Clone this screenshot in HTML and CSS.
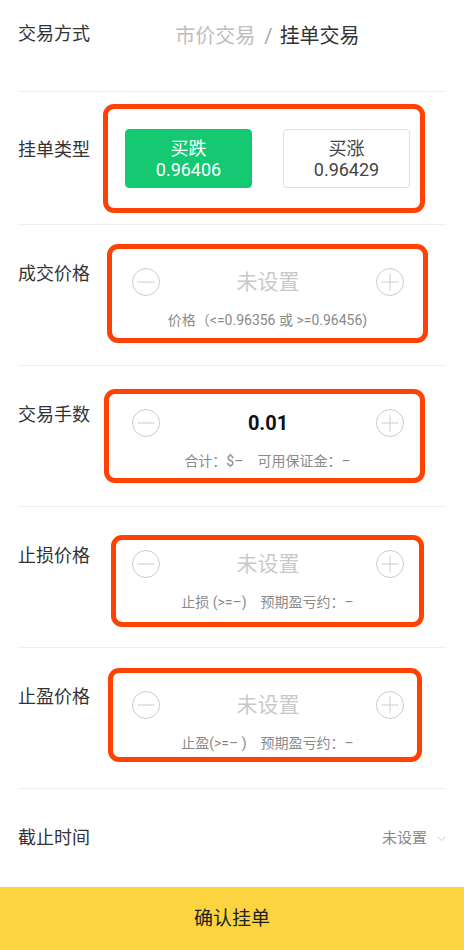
FILE: index.html
```html
<!DOCTYPE html>
<html lang="zh-CN">
<head>
<meta charset="utf-8">
<title>挂单交易</title>
<link rel="stylesheet" href="styles.css">
</head>
<body>
<div class="page">
  <div class="row row--mode">
    <div class="label">交易方式</div>
    <div class="field">
      <div class="mode"><span class="mode-off">市价交易</span><span class="slash">/</span><span class="mode-on">挂单交易</span></div>
    </div>
  </div>

  <div class="row row--type">
    <div class="label label--type">挂单类型</div>
    <div class="field">
      <div class="sides">
        <button class="side side--on"><span>买跌</span><span>0.96406</span></button>
        <button class="side"><span>买涨</span><span>0.96429</span></button>
      </div>
      <span class="mark mark--type"></span>
    </div>
  </div>

  <div class="row">
    <div class="label">成交价格</div>
    <div class="field">
      <div class="stepper">
        <div class="stepper-top">
          <svg class="ctl" viewBox="0 0 28 28" width="28" height="28"><circle cx="14" cy="14" r="13.5"/><line x1="5.5" y1="14" x2="22.5" y2="14"/></svg>
          <span class="value">未设置</span>
          <svg class="ctl" viewBox="0 0 28 28" width="28" height="28"><circle cx="14" cy="14" r="13.5"/><line x1="5.5" y1="14" x2="22.5" y2="14"/><line x1="14" y1="5.5" x2="14" y2="22.5"/></svg>
        </div>
        <div class="sub">价格（&lt;=0.96356 或 &gt;=0.96456)</div>
      </div>
      <span class="mark mark--price"></span>
    </div>
  </div>

  <div class="row">
    <div class="label">交易手数</div>
    <div class="field">
      <div class="stepper">
        <div class="stepper-top">
          <svg class="ctl" viewBox="0 0 28 28" width="28" height="28"><circle cx="14" cy="14" r="13.5"/><line x1="5.5" y1="14" x2="22.5" y2="14"/></svg>
          <span class="value value--set">0.01</span>
          <svg class="ctl" viewBox="0 0 28 28" width="28" height="28"><circle cx="14" cy="14" r="13.5"/><line x1="5.5" y1="14" x2="22.5" y2="14"/><line x1="14" y1="5.5" x2="14" y2="22.5"/></svg>
        </div>
        <div class="sub"><span>合计：$–</span><span class="sub-gap">可用保证金：–</span></div>
      </div>
      <span class="mark mark--lots"></span>
    </div>
  </div>

  <div class="row">
    <div class="label">止损价格</div>
    <div class="field">
      <div class="stepper">
        <div class="stepper-top">
          <svg class="ctl" viewBox="0 0 28 28" width="28" height="28"><circle cx="14" cy="14" r="13.5"/><line x1="5.5" y1="14" x2="22.5" y2="14"/></svg>
          <span class="value">未设置</span>
          <svg class="ctl" viewBox="0 0 28 28" width="28" height="28"><circle cx="14" cy="14" r="13.5"/><line x1="5.5" y1="14" x2="22.5" y2="14"/><line x1="14" y1="5.5" x2="14" y2="22.5"/></svg>
        </div>
        <div class="sub"><span>止损 (&gt;=–)</span><span class="sub-gap">预期盈亏约：–</span></div>
      </div>
      <span class="mark mark--loss"></span>
    </div>
  </div>

  <div class="row">
    <div class="label">止盈价格</div>
    <div class="field">
      <div class="stepper">
        <div class="stepper-top">
          <svg class="ctl" viewBox="0 0 28 28" width="28" height="28"><circle cx="14" cy="14" r="13.5"/><line x1="5.5" y1="14" x2="22.5" y2="14"/></svg>
          <span class="value">未设置</span>
          <svg class="ctl" viewBox="0 0 28 28" width="28" height="28"><circle cx="14" cy="14" r="13.5"/><line x1="5.5" y1="14" x2="22.5" y2="14"/><line x1="14" y1="5.5" x2="14" y2="22.5"/></svg>
        </div>
        <div class="sub"><span>止盈(&gt;=– )</span><span class="sub-gap">预期盈亏约：–</span></div>
      </div>
      <span class="mark mark--profit"></span>
    </div>
  </div>

  <div class="row row--expire">
    <div class="label label--plain">截止时间</div>
    <div class="expire">
      <span>未设置</span>
      <svg class="chev" viewBox="0 0 9 5" width="9" height="5"><polyline points="0.5,0.5 4.5,4.5 8.5,0.5"/></svg>
    </div>
  </div>

  <button class="confirm">确认挂单</button>
</div>
</body>
</html>
```

FILE: styles.css
```css
* { box-sizing: border-box; }

html, body {
  margin: 0;
  padding: 0;
  background: #fff;
}

body {
  font-family: Roboto, "Noto Sans CJK SC", sans-serif;
  color: #333;
  width: 464px;
  height: 950px;
  overflow: hidden;
}

.page {
  display: flex;
  flex-direction: column;
}

.row {
  display: flex;
  align-items: flex-start;
  margin: 0 18px;
  border-bottom: 1px solid #efefef;
  padding-bottom: 35px;
}

.label {
  flex: 0 0 86px;
  font-size: 18px;
  line-height: 24px;
  margin-top: 37px;
  color: #333;
}

.field {
  position: relative;
  flex: 0 0 327px;
}

/* row 1 */
.row--mode {
  height: 92px;
  padding-bottom: 0;
}
.row--mode .label { margin-top: 22px; }

.mode {
  margin-top: 23px;
  display: flex;
  justify-content: center;
  font-size: 20px;
  line-height: 26px;
}
.mode-off { color: #bdbdbd; }
.slash { color: #a8a8a8; margin: 0 7px 0 9px; }
.mode-on { color: #333; }

/* row 2 */
.row--type { padding-bottom: 0; height: 133px; }
.label--type { margin-top: 46px; }

.sides {
  display: flex;
  justify-content: center;
  gap: 31px;
  padding-top: 37px;
}

.side {
  width: 127px;
  height: 59px;
  border: 1px solid #dedede;
  border-radius: 4px;
  background: #fff;
  color: #444;
  display: flex;
  flex-direction: column;
  align-items: center;
  justify-content: center;
  font-family: inherit;
  font-size: 18px;
  line-height: 21px;
  padding: 1px 0 0;
}
.side--on {
  background: #15c872;
  border-color: #15c872;
  color: #fff;
}

/* stepper */
.stepper { padding-top: 43px; }

.stepper-top {
  display: flex;
  align-items: center;
  justify-content: space-between;
  height: 28px;
  padding: 0 27px 0 28px;
}

.ctl {
  fill: none;
  stroke: #cccccc;
  stroke-width: 1;
  display: block;
}

.value {
  font-size: 21px;
  line-height: 28px;
  color: #c9c9c9;
}
.value--set {
  color: #111;
  font-weight: 700;
  font-size: 20px;
}

.sub {
  margin-top: 14px;
  font-size: 14px;
  line-height: 20px;
  color: #8a8a8a;
  text-align: center;
}
.sub-gap { margin-left: 14px; }

/* annotation marks */
.mark {
  position: absolute;
  border: 5px solid #ff4104;
  border-radius: 11px;
  pointer-events: none;
}
.mark--type   { left: -1px; top: 12px; width: 322px; height: 109px; }
.mark--price  { left: 3px;  top: 19px; width: 321px; height: 99px; }
.mark--lots   { left: 0;    top: 23px; width: 321px; height: 94px; }
.mark--loss   { left: 7px;  top: 28px; width: 313px; height: 92px; }
.mark--profit { left: 4px;  top: 20px; width: 314px; height: 94px; }

/* expire row */
.row--expire {
  height: 98px;
  padding-bottom: 0;
  border-bottom: none;
  align-items: center;
  justify-content: space-between;
}
.label--plain { margin-top: 0; }

.expire {
  display: flex;
  align-items: center;
  font-size: 15px;
  line-height: 20px;
  color: #8a8a8a;
}
.chev {
  margin-left: 10px;
  fill: none;
  stroke: #c8c8c8;
  stroke-width: 1;
}

.confirm {
  height: 63px;
  width: 464px;
  border: none;
  background: #fcd43f;
  color: #222;
  font-family: inherit;
  font-size: 19px;
  line-height: 26px;
  padding: 0;
}
```
